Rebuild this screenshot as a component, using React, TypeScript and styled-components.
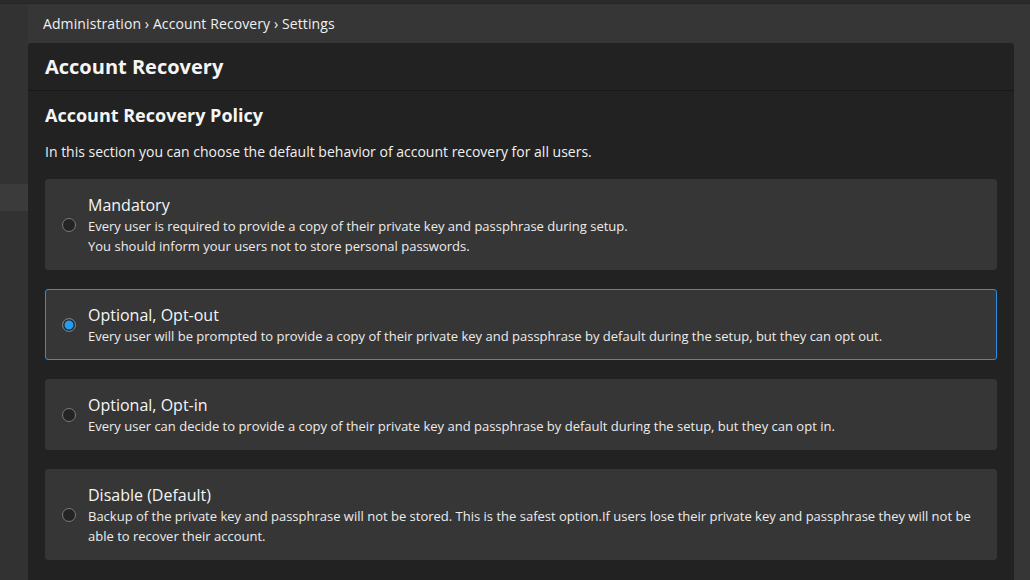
import React from "react";
import styled, { createGlobalStyle } from "styled-components";

const Global = createGlobalStyle`
  html, body { margin: 0; padding: 0; background: #363636; }
  body { font-family: "Open Sans", "Noto Sans", sans-serif; color: #f2f2f2; }
  * { box-sizing: border-box; }
`;

const Page = styled.div`
  width: 1030px;
  height: 580px;
  overflow: hidden;
  display: flex;
  flex-direction: column;
  background: #363636;
`;

const TopStrip = styled.div`
  height: 4px;
  flex: none;
  background: #2a2a2a;
  border-bottom: 1px solid #262626;
`;

const Body = styled.div`
  flex: 1;
  display: flex;
  min-height: 0;
`;

const Sidebar = styled.div`
  width: 28px;
  flex: none;
  background: #323232;
  padding-top: 180px;
`;

const SideItem = styled.div`
  height: 27px;
  background: #3b3b3b;
`;

const Main = styled.div`
  flex: 1;
  display: flex;
  flex-direction: column;
  padding-right: 16px;
  min-width: 0;
`;

const Breadcrumb = styled.div`
  height: 39px;
  flex: none;
  display: flex;
  align-items: center;
  padding-left: 15px;
  font-size: 14px;
  letter-spacing: 0.1px;
  color: #f0f0f0;
`;

const Panel = styled.div`
  flex: 1;
  background: #222222;
  border-radius: 3px 3px 0 0;
  display: flex;
  flex-direction: column;
`;

const PanelHeader = styled.div`
  height: 48px;
  flex: none;
  display: flex;
  align-items: center;
  padding: 0 17px;
  border-bottom: 1px solid #181818;
`;

const PanelTitle = styled.h1`
  margin: 0;
  font-size: 20px;
  font-weight: 700;
  color: #f5f5f5;
`;

const PanelBody = styled.div`
  padding: 11px 17px 0 17px;
  display: flex;
  flex-direction: column;
`;

const SectionTitle = styled.h2`
  margin: 0;
  font-size: 18px;
  font-weight: 700;
  line-height: 26px;
  color: #f5f5f5;
`;

const Intro = styled.p`
  margin: 13px 0 16px 0;
  font-size: 14px;
  line-height: 22px;
  color: #f0f0f0;
`;

const Options = styled.div`
  display: flex;
  flex-direction: column;
  gap: 19px;
`;

const Card = styled.label<{ $selected: boolean }>`
  display: flex;
  align-items: center;
  gap: 12px;
  padding: 14px 16px 13px 16px;
  background: #363636;
  border: 1px solid ${(p) => (p.$selected ? "#2d8de0" : "#363636")};
  border-radius: 3px;
  cursor: pointer;
`;

const Radio = styled.span<{ $checked: boolean }>`
  width: 14px;
  height: 14px;
  flex: none;
  border-radius: 50%;
  border: 1px solid #7a7a7a;
  background: ${(p) => (p.$checked ? "#2a9bf2" : "#242424")};
  box-shadow: ${(p) => (p.$checked ? "inset 0 0 0 1.5px #242424" : "none")};
`;

const Texts = styled.div`
  display: flex;
  flex-direction: column;
`;

const OptionTitle = styled.div`
  font-size: 16px;
  line-height: 22px;
  color: #f5f5f5;
`;

const OptionDesc = styled.div`
  font-size: 13px;
  line-height: 20px;
  color: #ececec;
`;

const options = [
  {
    title: "Mandatory",
    desc: [
      "Every user is required to provide a copy of their private key and passphrase during setup.",
      "You should inform your users not to store personal passwords.",
    ],
  },
  {
    title: "Optional, Opt-out",
    desc: [
      "Every user will be prompted to provide a copy of their private key and passphrase by default during the setup, but they can opt out.",
    ],
  },
  {
    title: "Optional, Opt-in",
    desc: [
      "Every user can decide to provide a copy of their private key and passphrase by default during the setup, but they can opt in.",
    ],
  },
  {
    title: "Disable (Default)",
    desc: [
      "Backup of the private key and passphrase will not be stored. This is the safest option.If users lose their private key and passphrase they will not be able to recover their account.",
    ],
  },
];

export default function App() {
  const [selected, setSelected] = React.useState(1);
  return (
    <Page>
      <Global />
      <TopStrip />
      <Body>
        <Sidebar>
          <SideItem />
        </Sidebar>
        <Main>
          <Breadcrumb>Administration › Account Recovery › Settings</Breadcrumb>
          <Panel>
            <PanelHeader>
              <PanelTitle>Account Recovery</PanelTitle>
            </PanelHeader>
            <PanelBody>
              <SectionTitle>Account Recovery Policy</SectionTitle>
              <Intro>In this section you can choose the default behavior of account recovery for all users.</Intro>
              <Options>
                {options.map((o, i) => (
                  <Card key={o.title} $selected={selected === i} onClick={() => setSelected(i)}>
                    <Radio $checked={selected === i} />
                    <Texts>
                      <OptionTitle>{o.title}</OptionTitle>
                      {o.desc.map((d) => (
                        <OptionDesc key={d}>{d}</OptionDesc>
                      ))}
                    </Texts>
                  </Card>
                ))}
              </Options>
            </PanelBody>
          </Panel>
        </Main>
      </Body>
    </Page>
  );
}
